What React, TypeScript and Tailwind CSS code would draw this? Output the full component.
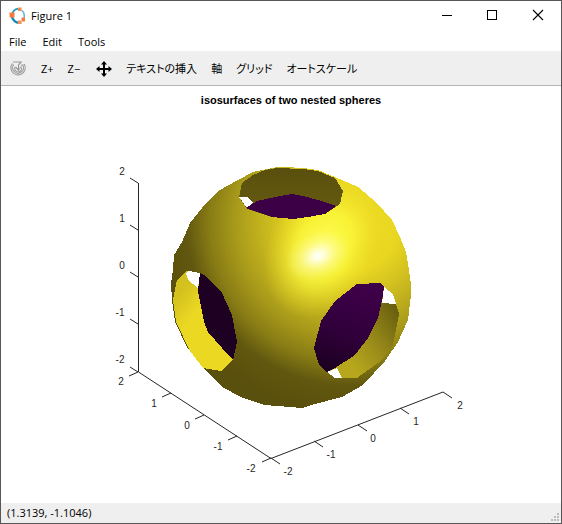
const uiFont = "font-['Open_Sans','Noto_Sans_CJK_JP',sans-serif]"
const toolFont =
  "font-['Open_Sans','Noto_Sans_CJK_JP',sans-serif] [font-feature-settings:'palt']"

const App = () => (
  <div className={`border border-[#5a5658] bg-white text-black ${uiFont}`}>
    <TitleBar />
    <MenuBar />
    <Toolbar />
    <Plot />
    <StatusBar />
  </div>
)

export default App

const TitleBar = () => (
  <header className="flex h-[30px] items-center justify-between pl-2">
    <div className="flex items-center gap-1">
      <OctaveLogo />
      <h1 className="text-[11px] leading-4">Figure 1</h1>
    </div>
    <div className="flex h-full">
      <button type="button" aria-label="Minimize" className="w-[46px]">
        <svg viewBox="0 0 46 30" className="h-full w-full" shapeRendering="crispEdges">
          <path d="M19 14.5h10" stroke="#000" />
        </svg>
      </button>
      <button type="button" aria-label="Maximize" className="w-[46px]">
        <svg viewBox="0 0 46 30" className="h-full w-full" shapeRendering="crispEdges">
          <path d="M18.500 9.500h9v9h-9z" fill="none" stroke="#000" />
        </svg>
      </button>
      <button type="button" aria-label="Close" className="w-[46px]">
        <svg viewBox="0 0 46 30" className="h-full w-full">
          <path d="M18 9l10 10M28 9L18 19" stroke="#000" strokeWidth="1.1" />
        </svg>
      </button>
    </div>
  </header>
)

const OctaveLogo = () => (
  <svg width="18" height="18" viewBox="0 0 18 18" fill="none">
    <path d="M3.300 6.500C5 2 8.500.9 11 2.700" stroke="#1a94bd" strokeWidth="1.800" />
    <path d="M2.800 8.500C3 13 7 16.800 12 15.500" stroke="#1589b3" strokeWidth="2.400" />
    <path d="M12.500 3c2.800 2.500 3.600 6 2 9.500" stroke="#62b9d3" strokeWidth="1.500" />
    <path d="M.5 5.500h5v5h-5z" fill="#f47b3c" />
    <path d="M9 .5h3.500V4H9z" fill="#f58a4c" />
    <path d="M12.500 10.500H16v4h-3.500z" fill="#f47b3c" />
    <path d="M9 13.500h3.500V17H9z" fill="#f69355" />
  </svg>
)

const menus = ['File', 'Edit', 'Tools']

const MenuBar = () => (
  <nav className="flex h-[21px] items-center gap-4 border-b border-[#efefef] px-2 pt-0.5 text-[11px] leading-4">
    {menus.map((menu) => (
      <button key={menu} type="button">
        {menu}
      </button>
    ))}
  </nav>
)

const actions = ['テキストの挿入', '軸', 'グリッド', 'オートスケール']

const Toolbar = () => (
  <div
    role="toolbar"
    className={`flex h-[34px] items-center border-b border-[#b4b4b4] bg-[#efefef] pl-2 text-[11px] leading-4 ${toolFont}`}
  >
    <button type="button" aria-label="Rotate" className="mr-3.5">
      <RotateIcon />
    </button>
    <button type="button" className="mr-3.5">Z+</button>
    <button type="button" className="mr-4">Z−</button>
    <button type="button" aria-label="Pan" className="mr-3.5">
      <MoveIcon />
    </button>
    <div className="flex gap-3.5">
      {actions.map((action) => (
        <button key={action} type="button">
          {action}
        </button>
      ))}
    </div>
  </div>
)

const RotateIcon = () => (
  <svg width="18" height="18" viewBox="0 0 18 18" fill="none">
    <path d="M4 4A6.300 6.300 0 1 0 14.500 4.500" stroke="#949494" strokeWidth="2.800" />
    <path d="M4 4A6.300 6.300 0 1 0 14.500 4.500" stroke="#d4d4d4" strokeWidth="1.200" />
    <path d="M6 7a3.500 3.500 0 1 0 6.500.500" stroke="#a0a0a0" strokeWidth="1.200" />
    <path d="M4 2h8l-2.500 3v5.500L6.500 7" stroke="#999" strokeWidth="1.200" />
    <path d="M9.500 10.500l4-6.500" stroke="#a5a5a5" />
  </svg>
)

const MoveIcon = () => (
  <svg width="16" height="16" viewBox="0 0 16 16">
    <path d="M8 0l3 3.500H9V7h3.500V5L16 8l-3.500 3V9H9v3.500h2L8 16l-3-3.500h2V9H3.500v2L0 8l3.500-3v2H7V3.500H5z" />
  </svg>
)

// Each tick is anchored on its axis; the label is centred on lx, ly.
const zTicks = [
  { label: '2', x: 138, y: 183, lx: 122, ly: 175 },
  { label: '1', x: 138, y: 230, lx: 122, ly: 222 },
  { label: '0', x: 138, y: 277, lx: 122, ly: 269 },
  { label: '-1', x: 138, y: 324, lx: 120, ly: 316 },
  { label: '-2', x: 138, y: 372, lx: 120, ly: 363 },
]

const yTicks = [
  { label: '2', x: 138, y: 372, lx: 121, ly: 385 },
  { label: '1', x: 171, y: 393, lx: 154, ly: 407 },
  { label: '0', x: 204, y: 415, lx: 187, ly: 429 },
  { label: '-1', x: 237, y: 436, lx: 218, ly: 450 },
  { label: '-2', x: 271, y: 458, lx: 251, ly: 472 },
]

const xTicks = [
  { label: '-2', x: 271, y: 458, lx: 288, ly: 475 },
  { label: '-1', x: 314, y: 441, lx: 331, ly: 458 },
  { label: '0', x: 358, y: 425, lx: 373, ly: 442 },
  { label: '1', x: 400, y: 408, lx: 416, ly: 425 },
  { label: '2', x: 443, y: 392, lx: 460, ly: 409 },
]

const axes = [
  { name: 'z', ticks: zTicks, dx: -8, dy: -5 },
  { name: 'y', ticks: yTicks, dx: -9, dy: 4 },
  { name: 'x', ticks: xTicks, dx: 9, dy: 6 },
]

const Plot = () => (
  <main>
    <svg
      viewBox="1 86 560 417"
      className="block h-auto w-full font-['Liberation_Sans',Arial,sans-serif]"
      role="img"
      aria-label="isosurfaces of two nested spheres"
    >
      <text x="291" y="104" textAnchor="middle" className="text-[11px] font-bold">
        isosurfaces of two nested spheres
      </text>
      <path
        d="M138.500 183v189L271 458.500L443 392"
        fill="none"
        stroke="#262626"
        strokeWidth="1"
      />
      {axes.map(({ name, ticks, dx, dy }) => (
        <g key={name}>
          {ticks.map(({ label, x, y, lx, ly }) => (
            <g key={label}>
              <path d={`M${x} ${y}l${dx} ${dy}`} stroke="#262626" />
              <text x={lx} y={ly} textAnchor="middle" fill="#262626" className="text-[10px]">
                {label}
              </text>
            </g>
          ))}
        </g>
      ))}
      <Spheres />
    </svg>
  </main>
)

const outline =
  '277,167 285,167 303,168 318,170 335,177 358,187 377,203 392,220 400,237 406,252 409,270 411,285 411,295 408,320 398,342 385,361 363,385 342,397 315,404 302,408 290,407 265,405 243,398 222,387 203,368 187,347 175,322 172,300 171,283 173,270 174,255 182,242 190,223 202,208 218,191 238,180 253,172'

const Spheres = () => (
  <g>
    <defs>
      <radialGradient id="outer" gradientUnits="userSpaceOnUse" cx="350" cy="222" r="190">
        <stop offset="0" stopColor="#efdd23" />
        <stop offset=".26" stopColor="#e8d621" />
        <stop offset=".42" stopColor="#cdbc1f" />
        <stop offset=".6" stopColor="#a99b1a" />
        <stop offset=".74" stopColor="#887c15" />
        <stop offset=".86" stopColor="#61570f" />
        <stop offset="1" stopColor="#5a500d" />
      </radialGradient>
      <radialGradient
        id="shine"
        gradientUnits="userSpaceOnUse"
        cx="0"
        cy="0"
        r="64"
        gradientTransform="translate(323 248) rotate(-62) scale(1.150 .85)"
      >
        <stop offset="0" stopColor="#ffff60" />
        <stop offset=".5" stopColor="#ffff40" stopOpacity=".65" />
        <stop offset="1" stopColor="#f0df25" stopOpacity="0" />
      </radialGradient>
      <radialGradient
        id="spot"
        gradientUnits="userSpaceOnUse"
        cx="0"
        cy="0"
        r="34"
        gradientTransform="translate(318 256) rotate(-20) scale(1 .7)"
      >
        <stop offset="0" stopColor="#fff" />
        <stop offset=".2" stopColor="#fff" stopOpacity=".75" />
        <stop offset=".55" stopColor="#fffbd0" stopOpacity=".35" />
        <stop offset="1" stopColor="#fffbb0" stopOpacity="0" />
      </radialGradient>
      <linearGradient id="leftInner" gradientUnits="userSpaceOnUse" x1="174" y1="300" x2="212" y2="330">
        <stop offset="0" stopColor="#d3c11f" />
        <stop offset=".5" stopColor="#ebd823" />
      </linearGradient>
      <linearGradient id="rightInner" gradientUnits="userSpaceOnUse" x1="345" y1="355" x2="402" y2="315">
        <stop offset="0" stopColor="#b7a71d" />
        <stop offset=".5" stopColor="#948718" />
        <stop offset="1" stopColor="#685d10" />
      </linearGradient>
      <linearGradient id="core" gradientUnits="userSpaceOnUse" x1="355" y1="285" x2="325" y2="370">
        <stop offset="0" stopColor="#3e0048" />
        <stop offset=".55" stopColor="#30003a" />
        <stop offset="1" stopColor="#1b001f" />
      </linearGradient>
      <linearGradient id="topInner" x1="0" y1="0" x2="0" y2="1">
        <stop offset="0" stopColor="#594f0e" />
        <stop offset="1" stopColor="#685d11" />
      </linearGradient>
    </defs>

    <g shapeRendering="crispEdges">
      <polygon points={outline} fill="url(#outer)" />
      <polygon points={outline} fill="url(#shine)" />
      <polygon points={outline} fill="url(#spot)" />

      {/* top opening */}
      <polygon
        points="253,175 265,170 277,168 303,169 318,171 335,178 343,191 340,204 325,214 308,217 293,219 272,217 247,209 239,197 242,183"
        fill="url(#topInner)"
      />
      <polygon points="239,197 247,197 253,203 247,208" fill="#fff" />
      <polygon
        points="246,208 257,201 275,197 292,194 303,196 318,200 336,206 325,214 308,217 293,219 272,217"
        fill="#3b0045"
      />

      {/* left opening */}
      <polygon
        points="177,280 187,271 200,273 213,284 222,293 232,315 237,342 233,360 221,371 203,368 190,351 176,322 173,300"
        fill="url(#leftInner)"
      />
      <polygon points="186,273 189,271 200,273 198,288 188,280" fill="#fff" />
      <polygon
        points="200,273 204,275 213,284 222,293 232,315 237,342 233,360 222,348 208,332 204,322 198,291"
        fill="#1e0023"
      />

      {/* right opening */}
      <polygon
        points="380,283 384,287 393,294 399,314 393,345 382,360 357,378 335,378 319,365 314,348 321,321 335,301 357,284"
        fill="url(#rightInner)"
      />
      <polygon points="384,287 393,294 396,304 382,303" fill="#fff" />
      <polygon points="327,372 337,368 342,378 335,378" fill="#fff" />
      <polygon
        points="357,284 380,283 384,287 382,300 378,318 368,338 355,355 335,368 327,372 319,365 314,348 321,321 335,301"
        fill="url(#core)"
      />
    </g>
  </g>
)

const gripDots = [
  [6, 0],
  [3, 3],
  [6, 3],
  [0, 6],
  [3, 6],
  [6, 6],
]

const StatusBar = () => (
  <footer className="flex h-5 items-center justify-between bg-[#efefef] pr-0.5 pl-1.5 text-[11px] leading-4">
    <span>(1.3139, -1.1046)</span>
    <svg width="8" height="8" viewBox="0 0 8 8" className="mt-2" shapeRendering="crispEdges">
      {gripDots.map(([x, y]) => (
        <rect key={`${x}-${y}`} x={x} y={y} width="2" height="2" fill="#bcbcbc" />
      ))}
    </svg>
  </footer>
)
